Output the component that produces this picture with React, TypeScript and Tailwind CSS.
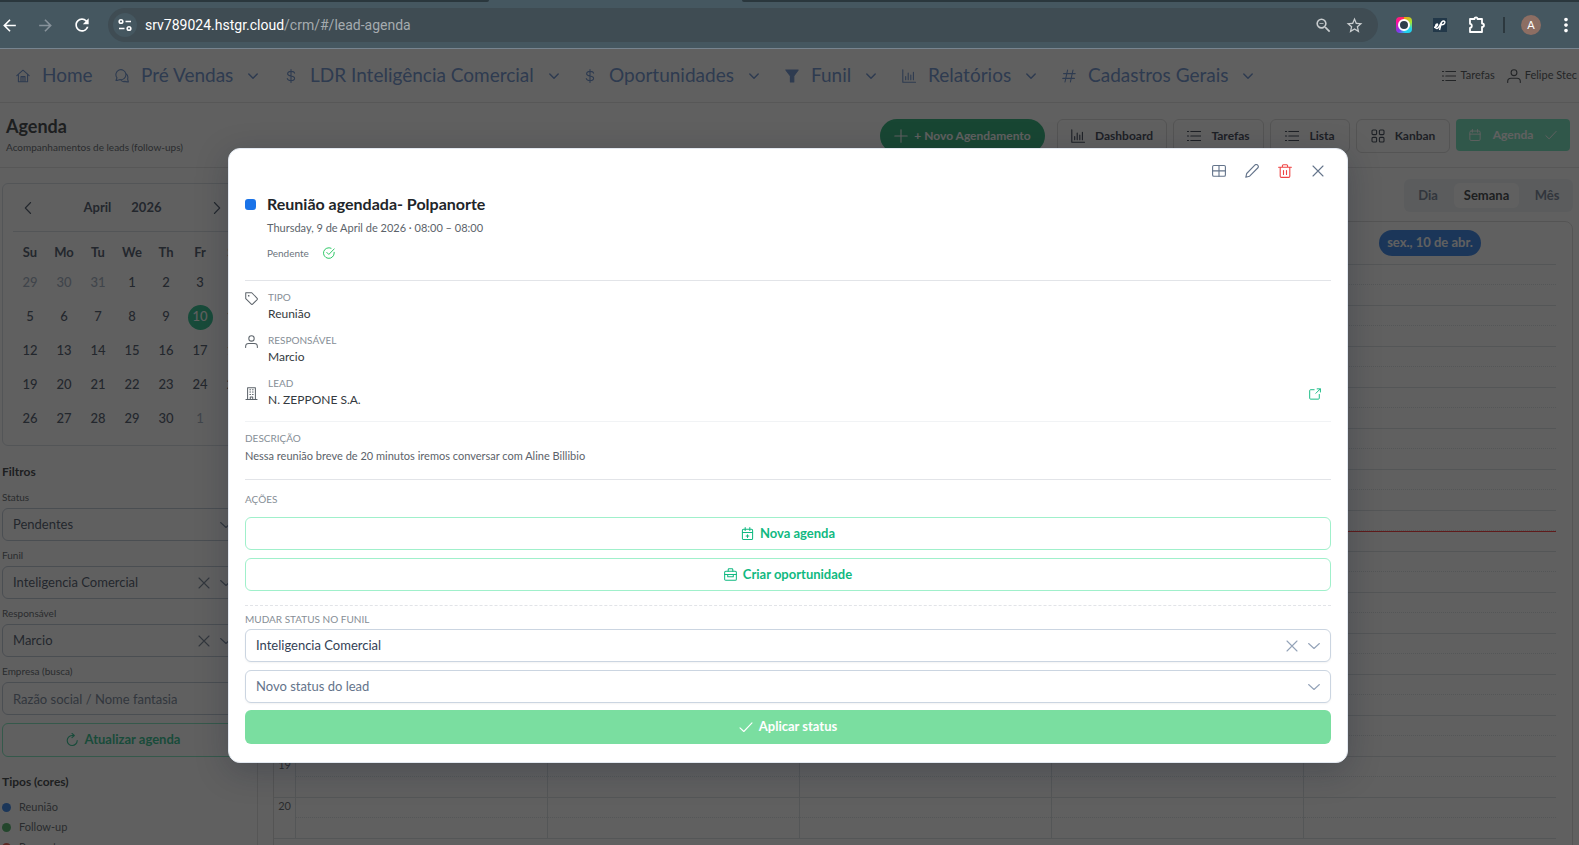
import { useState } from 'react';
import type { ReactNode } from 'react';
import { MdArrowBack, MdArrowForward, MdMoreVert, MdRefresh, MdStarBorder, MdZoomOut } from 'react-icons/md';

// line icons share a 14px grid
const paths: Record<string, ReactNode> = {
  home: <path d="M.8 6.6 7 1.2l6.2 5.4M2.4 5.6v7.2h9.2V5.6M5 12.8V7.6h4v5.2M7 7.6v5" />,
  comments: <path d="M1 11.4 2 8.8A5 5 0 1 1 5 10.6c-1.200 0-2 .8-4 .8ZM11 4.600a5 5 0 0 1 1.600 5.400l.8 3c-1.600 0-2.400-.4-3.400-.6-1.600.4-3.400 0-4.400-1.600" />,
  dollar: <path d="M7 .6v12.800M10.600 4.200C10.200 2.800 8.800 2.400 7 2.400c-2 0-3.400.8-3.400 2.300C3.600 8 10.600 6 10.600 9.300c0 1.500-1.400 2.300-3.600 2.300-1.900 0-3.300-.6-3.700-2" />,
  filter: <path fill="currentColor" d="M.8 1h12.400L8.800 7v6H5.400V7Z" />,
  chart: <path d="M.8.8v12.400h12.700M3.700 7.500v3.200M6.200 4v6.700M8.800 6v4.700M11.400 3.200v7.500" />,
  hash: <path d="M5.600 1 3 13M11 1 8.400 13M1.600 4.600h11.600M.8 9.400h11.600" />,
  list: <path d="M.4 2.500h1.200M.4 7h1.200M.4 11.500h1.200M3.800 2.500h9.800M3.800 7h9.800M3.800 11.500h9.800" />,
  user: <><circle cx="7" cy="3.700" r="2.900" /><path d="M.7 13.400v-1c0-2 1.300-3.200 3.300-3.200h6c2 0 3.300 1.200 3.300 3.200v1" /></>,
  grid: <><rect x="1" y="1" width="4.600" height="4.600" rx="1" /><rect x="8.400" y="1" width="4.600" height="4.600" rx="1" /><rect x="1" y="8.400" width="4.600" height="4.600" rx="1" /><rect x="8.400" y="8.400" width="4.600" height="4.600" rx="1" /></>,
  calendar: <><rect x="1" y="2.400" width="12" height="11" rx="1.400" /><path d="M1 6h12M4 .6v3.200M10 .6v3.200" /></>,
  calendarPlus: <><rect x="1.500" y="2.500" width="11" height="11" rx="1.200" /><path d="M1.500 6h11M4.500.6v3.200M9.500.6v3.200M7 8.300v3M5.500 9.800h3" /></>,
  briefcase: <><rect x=".7" y="3.500" width="12.600" height="9.700" rx="1.200" /><path d="M4.500 3.500V1.800c0-.5.4-.9.9-.9h3.200c.5 0 .9.4.9.9v1.700M.7 7h12.600M4 7v2.400h6V7" /></>,
  check: <path d="m1 7.800 3.800 3.700L13 2.800" />,
  times: <path d="m2 2 10 10M12 2 2 12" />,
  plus: <path d="M7 .8v12.400M.8 7h12.400" />,
  down: <path d="m1.600 4.500 5.400 5 5.400-5" />,
  navDown: <path d="m2.800 5 4.200 4.200L11.200 5" />,
  left: <path d="M9.600 1.500 4.300 7l5.300 5.500" />,
  right: <path d="M4.400 1.500 9.700 7l-5.300 5.500" />,
  refresh: <path d="M7 2.500h2M7 .4l2.300 2.100L7 4.700M9 2.500H7a5 5 0 1 0 5.200 5" />,
  table: <><rect x=".6" y="1.500" width="12.800" height="10.800" rx="1.300" /><path d="M.6 6.900h12.800M7 1.500v10.800" /></>,
  pencil: <path d="M9.800 1.200a1.800 1.800 0 0 1 2.900 2.800l-8.300 8.300-3.600 1 .9-3.800Z" />,
  trash: <path d="M.6 3.300h12.800M2.200 3.300v8.900c0 .7.500 1.200 1.200 1.200h7.200c.7 0 1.200-.5 1.200-1.200V3.300M4.400 3.300V1.700c0-.6.4-1 1-1h3.200c.6 0 1 .4 1 1v1.600M5.500 6.500v4M8.500 6.500v4" />,
  tag: <><path d="M.8.8h6.500l5.800 6a1 1 0 0 1 0 1.300l-4.900 5a1 1 0 0 1-1.400 0l-6-5.900Z" /><path d="M3.700 3.700h.6v.6h-.6Z" /></>,
  building: <path d="M1 13.400h12M2.800 13.400V.7h8.400v12.700M5.200 3h.8M8 3h.8M5.200 5.500h.8M8 5.500h.8M5.200 8h.8M8 8h.8M5.700 13.400v-2.700h2.600v2.700" />,
  external: <path d="M6 2H1.800c-.6 0-1 .4-1 1v9c0 .6.4 1 1 1H11c.6 0 1-.4 1-1V7.500M9.500 1h3.800v3.700M13.200 1 8 6.200" />,
  checkCircle: <path d="M13 6.200V7a6.200 6.200 0 1 1-3.600-5.600M4.400 6.300 6.800 8.700l6.300-6.500" />,
};

const Icon = ({ name, className = 'size-3.5' }: { name: string; className?: string }) => (
  <svg viewBox="0 0 14 14" fill="none" stroke="currentColor" strokeWidth="1.100" strokeLinecap="round" strokeLinejoin="round" className={`shrink-0 ${className}`} aria-hidden="true">
    {paths[name]}
  </svg>
);

const navItems = [
  { icon: 'home', label: 'Home', width: 'w-[99px]', menu: false },
  { icon: 'comments', label: 'Pré Vendas', width: 'w-[169px]', menu: true },
  { icon: 'dollar', label: 'LDR Inteligência Comercial', width: 'w-[299px]', menu: true },
  { icon: 'dollar', label: 'Oportunidades', width: 'w-[202px]', menu: true },
  { icon: 'filter', label: 'Funil', width: 'w-[117px]', menu: true },
  { icon: 'chart', label: 'Relatórios', width: 'w-[160px]', menu: true },
  { icon: 'hash', label: 'Cadastros Gerais', width: 'w-[196px]', menu: true },
];

const views = [
  { icon: 'chart', label: 'Dashboard', width: 'w-[110px]' },
  { icon: 'list', label: 'Tarefas', width: 'w-[91px]' },
  { icon: 'list', label: 'Lista', width: 'w-20' },
  { icon: 'grid', label: 'Kanban', width: 'w-[94px]' },
];

const weekdays = ['Su', 'Mo', 'Tu', 'We', 'Th', 'Fr', 'Sa'];

const weeks = [
  [29, 30, 31, 1, 2, 3, 4],
  [5, 6, 7, 8, 9, 10, 11],
  [12, 13, 14, 15, 16, 17, 18],
  [19, 20, 21, 22, 23, 24, 25],
  [26, 27, 28, 29, 30, 1, 2],
];

const hours = ['07', '08', '09', '10', '11', '12', '13', '14', '15', '16', '17', '18', '19', '20'];

const BrowserBar = () => (
  <header className="shrink-0 bg-[#455760] border-b border-[#77848f]">
    <div className="flex justify-between h-0.5">
      <div className="w-[31%] bg-[#2a373d] rounded-br-lg" />
      <div className="w-[53%] bg-[#2a373d] rounded-bl-lg" />
    </div>
    <div className="flex items-center h-[46px] pr-0.5 text-white">
      <button type="button" aria-label="Voltar" className="w-5"><MdArrowBack size={19} /></button>
      <button type="button" aria-label="Avançar" className="ml-4 w-5 text-[#87929a]"><MdArrowForward size={19} /></button>
      <button type="button" aria-label="Recarregar" className="ml-4 w-5"><MdRefresh size={20} /></button>
      <div className="flex flex-1 items-center ml-4 h-[34px] pl-[5px] pr-3.5 rounded-full bg-[#3f4c53]">
        <button type="button" aria-label="Informações do site" className="flex items-center justify-center size-6 rounded-full bg-[#455760]">
          <svg viewBox="0 0 14 14" className="size-3.5" fill="none" stroke="currentColor" strokeWidth="1.600">
            <circle cx="3" cy="3.500" r="1.800" /><path d="M7.500 3.500H13M1 10.500h5.500" /><circle cx="11" cy="10.500" r="1.800" />
          </svg>
        </button>
        <div className="flex-1 ml-2 text-[14px] font-[Roboto,sans-serif] whitespace-nowrap">
          srv789024.hstgr.cloud<span className="text-[#a5abaf]">/crm/#/lead-agenda</span>
        </div>
        <MdZoomOut size={19} className="text-[#c9cdcf]" />
        <MdStarBorder size={19} className="ml-3 text-[#c9cdcf]" />
      </div>
      <div className="flex items-center justify-center ml-[18px] size-4 rounded-sm bg-[conic-gradient(#f59e0b,#a3e635_70deg,#22d3ee_120deg,#22d3ee_170deg,#7c3aed_220deg,#ff0fa0_290deg,#ff2d55)]">
        <div className="size-3 rounded-full border-2 border-white bg-[#2f3f4c]" />
      </div>
      <svg viewBox="0 0 16 16" className="ml-5 size-4" fill="none">
        <rect x="1" y="1" width="14" height="14" fill="#223849" />
        <path d="M2 10.500c3-.5 4.500-3.500 3-3.500s-2.500 4.500 0 4.500 3.500-7.500 6.500-7.500c2.500 0 1.500 4-2 3.800M9.500 5.500 7.500 13" stroke="#fff" strokeWidth="1.400" />
      </svg>
      <svg viewBox="0 0 18 18" className="ml-5 size-[18px]" fill="none" stroke="#fff" strokeWidth="1.800" strokeLinejoin="round">
        <path d="M2 3h4.500c0-2.200 3-2.200 3 0H14v4.500c2.600 0 2.600 3.400 0 3.400V16H2v-4.200c2.400 0 2.400-4 0-4Z" />
      </svg>
      <div className="ml-[17px] w-0.5 h-4 bg-[#2c383e]" />
      <div className="flex items-center justify-center ml-4 size-5 rounded-full bg-[#8d6e63] text-[11px]">A</div>
      <button type="button" aria-label="Menu do navegador" className="ml-3.5"><MdMoreVert size={22} /></button>
    </div>
  </header>
);

const NavBar = () => (
  <nav className="flex items-center h-[54px] pl-4 border-b border-[#e2e2e2]">
    {navItems.map(item => (
      <a key={item.label} href="#" className={`flex items-center shrink-0 text-[19px] text-[#5782c8] whitespace-nowrap ${item.width}`}>
        <Icon name={item.icon} className="size-3.5 mr-3" />
        {item.label}
        {item.menu && <Icon name="navDown" className="size-3.5 ml-[13px] stroke-[1.5]" />}
      </a>
    ))}
    <div className="flex items-center gap-3 ml-auto pr-0.5 text-[11px] text-[#343a40] whitespace-nowrap">
      <a href="#" className="flex items-center gap-1"><Icon name="list" />Tarefas</a>
      <a href="#" className="flex items-center gap-1"><Icon name="user" />Felipe Stec</a>
    </div>
  </nav>
);

const PageHeader = () => (
  <div className="flex items-start justify-between h-[65px] pl-1.5 pr-[9px] border-b border-[#e2e2e2]">
    <div className="pt-[11px]">
      <h1 className="text-lg leading-6 font-bold text-[#212529]">Agenda</h1>
      <p className="text-[10px] leading-[18px] text-[#495057]">Acompanhamentos de leads (follow-ups)</p>
    </div>
    <div className="flex gap-1.5 pt-4 text-xs font-bold text-[#1e293b]">
      <button type="button" className="flex items-center justify-center gap-1.5 w-[165px] h-[34px] mr-1.5 rounded-full bg-[#0fa968] text-white">
        <Icon name="plus" />+ Novo Agendamento
      </button>
      {views.map(view => (
        <button key={view.label} type="button" className={`flex items-center justify-center gap-2.5 h-[34px] rounded-md border border-[#d5d5d5] ${view.width}`}>
          <Icon name={view.icon} />{view.label}
        </button>
      ))}
      <button type="button" className="flex items-center justify-center gap-3 w-[114px] h-8 rounded bg-[#5fe0b5] text-white">
        <Icon name="calendar" className="size-3" />Agenda<Icon name="check" className="size-3" />
      </button>
    </div>
  </div>
);

const MiniCalendar = () => (
  <section className="mt-[15px] h-[263px] px-2.5 rounded-md border border-[#d3dae2] overflow-hidden text-[#334155]">
    <div className="flex items-center justify-between h-12 px-2 border-b border-[#d3dae2] text-[13px] font-bold">
      <button type="button" aria-label="Mês anterior"><Icon name="left" /></button>
      <div className="flex gap-5"><span>April</span><span>2026</span></div>
      <button type="button" aria-label="Próximo mês"><Icon name="right" /></button>
    </div>
    <table className="w-[238px] mt-2 table-fixed text-center text-[13px] font-medium">
      <thead>
        <tr className="h-[26px]">{weekdays.map(day => <th key={day} className="font-bold">{day}</th>)}</tr>
      </thead>
      <tbody>
        {weeks.map((week, row) => (
          <tr key={row} className="h-[34px]">
            {week.map((day, col) => {
              const outside = (row === 0 && day > 20) || (row === 4 && day < 10);
              const today = row === 1 && day === 10;
              return (
                <td key={col} className={outside ? 'text-[#94a3b8]' : ''}>
                  <span className={today ? 'inline-flex items-center justify-center size-[25px] rounded-full bg-[#10b981] text-white' : ''}>{day}</span>
                </td>
              );
            })}
          </tr>
        ))}
      </tbody>
    </table>
  </section>
);

const FilterSelect = ({ id, label, value, clearable = false }: { id: string; label: string; value: string; clearable?: boolean }) => (
  <div className="mb-1.5">
    <label htmlFor={id} className="block mb-[3px] text-[10px] leading-4 text-[#495057]">{label}</label>
    <div className="relative">
      <select id={id} className="appearance-none w-full h-[33px] px-2.5 rounded-md border border-[#b6c1d0] text-[13px] text-[#334155]">
        <option>{value}</option>
      </select>
      <div className="absolute inset-y-0 right-2.5 flex items-center gap-2 text-[#64748b] pointer-events-none">
        {clearable && <Icon name="times" />}
        <Icon name="down" />
      </div>
    </div>
  </div>
);

const Sidebar = () => (
  <aside className="shrink-0 w-[258px] pl-0.5 pr-3.5 border-r border-[#dcdcdc]">
    <MiniCalendar />
    <h2 className="mt-4 mb-[7px] text-xs leading-5 font-bold text-[#212529]">Filtros</h2>
    <FilterSelect id="filtro-status" label="Status" value="Pendentes" />
    <FilterSelect id="filtro-funil" label="Funil" value="Inteligencia Comercial" clearable />
    <FilterSelect id="filtro-responsavel" label="Responsável" value="Marcio" clearable />
    <label htmlFor="filtro-empresa" className="block mb-[3px] text-[10px] leading-4 text-[#495057]">Empresa (busca)</label>
    <input
      id="filtro-empresa"
      type="text"
      placeholder="Razão social / Nome fantasia"
      className="block w-full h-[33px] px-2.5 rounded-md border border-[#b6c1d0] text-[13px] placeholder:text-[#64748b]"
    />
    <button type="button" className="flex items-center justify-center gap-1.5 w-full h-[34px] mt-2 rounded-md border border-[#6ee7b7] text-[13px] font-bold text-[#10b981]">
      <Icon name="refresh" />Atualizar agenda
    </button>
    <h2 className="mt-[15px] text-xs leading-5 font-bold text-[#212529]">Tipos (cores)</h2>
    <ul className="mt-[5px] text-[11px] leading-5 text-[#495057]">
      <li className="flex items-center gap-2"><span className="size-[9px] rounded-full bg-[#1a73e8]" />Reunião</li>
      <li className="flex items-center gap-2"><span className="size-[9px] rounded-full bg-[#34a853]" />Follow-up</li>
      <li className="flex items-center gap-2"><span className="size-[9px] rounded-full bg-[#ea4335]" />Proposta</li>
    </ul>
  </aside>
);

const WeekView = () => (
  <main className="flex-1 min-w-0 pl-[15px] pr-1.5">
    <div className="flex justify-end pt-[11px]">
      <div className="flex items-center gap-1.5 w-[169px] h-[33px] p-1 rounded-md bg-[#eef2f6] text-[13px] font-bold text-[#64748b]">
        <button type="button" className="w-10">Dia</button>
        <button type="button" className="w-[65px] h-[25px] rounded-md bg-white text-[#212529]">Semana</button>
        <button type="button" className="flex-1">Mês</button>
      </div>
    </div>
    <div className="mt-[9px] pr-4 rounded-lg border border-[#d8d8d8]">
      <div className="grid grid-cols-[22px_repeat(5,1fr)] items-center h-[42px] text-[13px] font-bold text-white">
        <span className="col-start-6 justify-self-center flex items-center h-[26px] px-2 rounded-full bg-[#1a73e8]">sex., 10 de abr.</span>
      </div>
      {hours.map(hour => (
        <div key={hour} className="grid grid-cols-[22px_repeat(5,1fr)] h-[41px] border-t border-[#d8dce0] text-[11px] text-[#495057]">
          <div className="pr-1 leading-4 text-right border-r border-[#d8dce0]">{hour}</div>
          {[0, 1, 2, 3, 4].map(day => (
            <div key={day} className={day < 4 ? 'border-r border-[#d8dce0]' : ''}>
              <div className="h-5 border-b border-dotted border-[#d8dce0]" />
              {/* current time */}
              {hour === '13' && day === 4 && <div className="h-px bg-[#ff1a1a]" />}
            </div>
          ))}
        </div>
      ))}
      <div className="h-40 border-t border-[#d8dce0]" />
    </div>
  </main>
);

const Field = ({ icon, label, value, center = false, children }: { icon: string; label: string; value: string; center?: boolean; children?: ReactNode }) => (
  <div className={`flex gap-2.5 h-[43px] ${center ? 'items-center' : 'items-start'}`}>
    <span className={`flex text-[#5c636a] ${center ? '' : 'pt-1.5'}`}><Icon name={icon} className="size-[13px]" /></span>
    <div className="flex-1 h-full pt-[3px]">
      <div className="text-[10px] leading-4 text-[#868e96]">{label}</div>
      <div className="text-xs leading-[18px] text-[#343a40]">{value}</div>
    </div>
    {children}
  </div>
);

const LeadModal = () => {
  const [funil, setFunil] = useState('Inteligencia Comercial');

  return (
    <div className="absolute inset-0 flex items-start pt-[99px] pl-[228px] pr-[231px] bg-[rgba(28,28,28,0.7)]">
      <div role="dialog" aria-modal="true" aria-labelledby="lead-title" className="w-full px-4 pb-[18px] rounded-xl border border-[#e2e8f0] bg-white shadow-[0_8px_32px_rgba(15,23,42,0.25)]">
        <div className="flex justify-end gap-[19px] pt-[15px] pr-1.5 text-[#64748b]">
          <button type="button" aria-label="Detalhes"><Icon name="table" /></button>
          <button type="button" aria-label="Editar"><Icon name="pencil" /></button>
          <button type="button" aria-label="Excluir" className="text-[#ef4444]"><Icon name="trash" /></button>
          <button type="button" aria-label="Fechar" onClick={() => setFunil('')}><Icon name="times" /></button>
        </div>

        <div className="flex gap-[11px] h-[103px] pt-[13px] border-b border-[#e2e4e8]">
          <span className="shrink-0 size-[11px] mt-2 rounded-[3px] bg-[#1a73e8]" />
          <div>
            <h2 id="lead-title" className="text-base leading-[26px] font-bold text-[#212529]">Reunião agendada- Polpanorte</h2>
            <p className="text-[11px] leading-[22px] text-[#5c636a]">Thursday, 9 de April de 2026 · 08:00 – 08:00</p>
            <p className="flex items-center gap-3.5 pt-0.5 text-[10px] leading-6 text-[#6c757d]">
              Pendente<Icon name="checkCircle" className="size-3 text-[#22c55e]" />
            </p>
          </div>
        </div>

        <div className="pt-[5px] h-[141px] border-b border-[#f1f3f5]">
          <Field icon="tag" label="TIPO" value="Reunião" />
          <Field icon="user" label="RESPONSÁVEL" value="Marcio" />
          <Field icon="building" label="LEAD" value="N. ZEPPONE S.A." center>
            <a href="#" aria-label="Abrir lead" className="pr-2.5 text-[#10b981]"><Icon name="external" className="size-3" /></a>
          </Field>
        </div>

        <div className="h-[58px] pt-2 border-b border-[#e2e4e8]">
          <div className="text-[10px] leading-4 text-[#868e96]">DESCRIÇÃO</div>
          <p className="text-[11px] leading-5 text-[#5c636a]">Nessa reunião breve de 20 minutos iremos conversar com Aline Billibio</p>
        </div>

        <div className="pt-[11px] pb-3.5 border-b border-dashed border-[#e2e4e8] text-[13px] font-bold text-[#10b981]">
          <div className="mb-2.5 text-[10px] leading-4 font-normal text-[#868e96]">AÇÕES</div>
          <button type="button" className="flex items-center justify-center gap-1.5 w-full h-[33px] mb-2 rounded-md border border-[#a0f0cb]">
            <Icon name="calendarPlus" className="size-[13px]" />Nova agenda
          </button>
          <button type="button" className="flex items-center justify-center gap-1.5 w-full h-[33px] rounded-md border border-[#a0f0cb]">
            <Icon name="briefcase" className="size-[13px]" />Criar oportunidade
          </button>
        </div>

        <div className="flex flex-col pt-[5px] text-[13px]">
          <label htmlFor="modal-funil" className="mb-0.5 text-[10px] leading-4 text-[#868e96]">MUDAR STATUS NO FUNIL</label>
          <div className="relative">
            <select
              id="modal-funil"
              value={funil}
              onChange={e => setFunil(e.target.value)}
              className="appearance-none block w-full h-[33px] px-2.5 rounded-md border border-[#cbd5e1] bg-white text-[#334155] shadow-xs"
            >
              <option value=""></option>
              <option>Inteligencia Comercial</option>
            </select>
            <div className="absolute inset-y-0 right-2.5 flex items-center gap-2 text-[#94a3b8]">
              <button type="button" aria-label="Limpar funil" onClick={() => setFunil('')}><Icon name="times" /></button>
              <Icon name="down" className="size-3.5 pointer-events-none" />
            </div>
          </div>
          <div className="relative mt-2">
            <select aria-label="Novo status do lead" className="appearance-none block w-full h-[33px] px-2.5 rounded-md border border-[#cbd5e1] bg-white text-[#64748b] shadow-xs">
              <option>Novo status do lead</option>
            </select>
            <div className="absolute inset-y-0 right-2.5 flex items-center text-[#94a3b8] pointer-events-none"><Icon name="down" /></div>
          </div>
          <button type="button" className="flex items-center justify-center gap-1.5 h-[34px] mt-[7px] rounded-md bg-[#7adea0] font-bold text-white">
            <Icon name="check" />Aplicar status
          </button>
        </div>
      </div>
    </div>
  );
};

const App = () => (
  <div className="flex flex-col h-screen overflow-hidden bg-white font-[Lato,'Liberation_Sans',sans-serif]">
    <BrowserBar />
    <div className="relative flex-1 min-h-0 overflow-hidden">
      <NavBar />
      <PageHeader />
      <div className="flex">
        <Sidebar />
        <WeekView />
      </div>
      <LeadModal />
    </div>
  </div>
);

export default App;
